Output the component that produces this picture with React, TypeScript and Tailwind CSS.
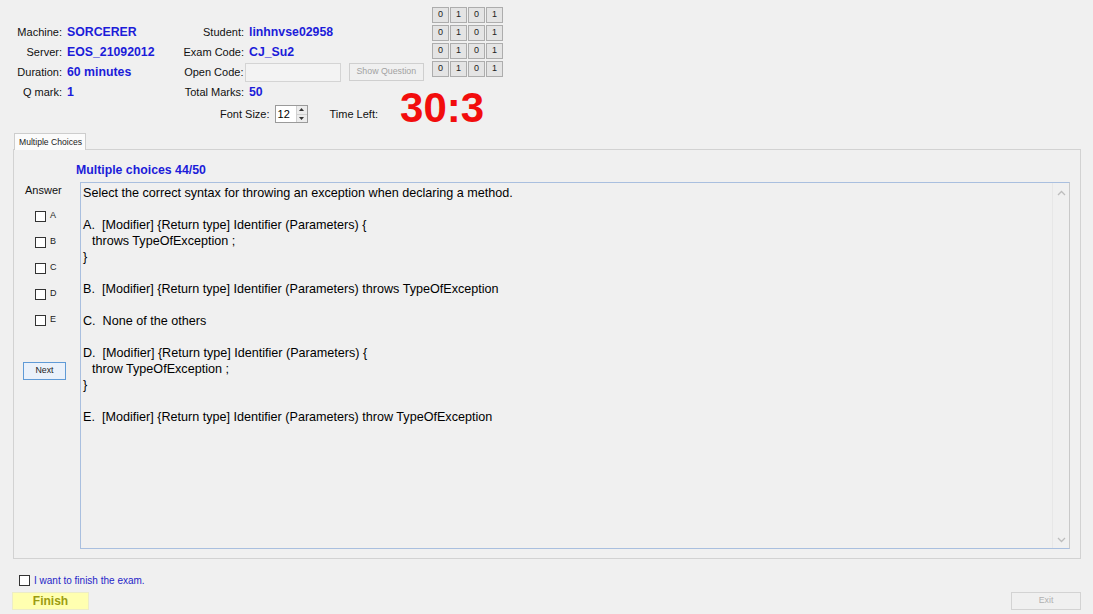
import React from "react";

const Box = () => (
  <span className="inline-block w-[11px] h-[11px] border border-[#333333] bg-white shrink-0" />
);

function InfoRow({ label, value, lw }: { label: string; value: React.ReactNode; lw: string }) {
  return (
    <div className="flex items-center h-[20px]">
      <span className={`${lw} text-right text-[11px] text-[#111]`}>{label}</span>
      <span className="ml-[5px] text-[12.3px] font-bold text-[#1c1cd9] whitespace-nowrap">{value}</span>
    </div>
  );
}

function Cell({ t }: { t: string }) {
  return (
    <div className="w-[17px] h-[16px] border border-[#adadad] bg-[#e4e4e4] flex items-center justify-center text-[9px] text-[#222]">
      {t}
    </div>
  );
}

const Up = () => (
  <svg width="9" height="6" viewBox="0 0 9 6">
    <path d="M1 5 L4.5 1.5 L8 5" fill="none" stroke="#bdbdbd" strokeWidth="1.3" />
  </svg>
);
const Down = () => (
  <svg width="9" height="6" viewBox="0 0 9 6">
    <path d="M1 1 L4.5 4.5 L8 1" fill="none" stroke="#bdbdbd" strokeWidth="1.3" />
  </svg>
);

export default function App() {
  const lines: React.ReactNode[] = [
    "Select the correct syntax for throwing an exception when declaring a method.",
    "",
    "A.  [Modifier] {Return type] Identifier (Parameters) {",
    <span className="pl-[9px]">throws TypeOfException ;</span>,
    "}",
    "",
    "B.  [Modifier] {Return type] Identifier (Parameters) throws TypeOfException",
    "",
    "C.  None of the others",
    "",
    "D.  [Modifier] {Return type] Identifier (Parameters) {",
    <span className="pl-[9px]">throw TypeOfException ;</span>,
    "}",
    "",
    "E.  [Modifier] {Return type] Identifier (Parameters) throw TypeOfException",
  ];
  return (
    <div
      className="w-[1093px] h-[614px] bg-[#f0f0f0] overflow-hidden text-black"
      style={{ fontFamily: '"Liberation Sans", Arial, sans-serif' }}
    >
      {/* header */}
      <div className="h-[133px] flex">
        <div className="w-[170px] ml-[10px] pt-[22px]">
          <InfoRow lw="w-[52px]" label="Machine:" value="SORCERER" />
          <InfoRow lw="w-[52px]" label="Server:" value="EOS_21092012" />
          <InfoRow lw="w-[52px]" label="Duration:" value="60 minutes" />
          <InfoRow lw="w-[52px]" label="Q mark:" value="1" />
        </div>
        <div className="flex flex-col pt-[7px]">
          <div className="flex">
            <div className="w-[244px] mt-[15px]">
              <InfoRow lw="w-[64px]" label="Student:" value="linhnvse02958" />
              <InfoRow lw="w-[64px]" label="Exam Code:" value="CJ_Su2" />
              <div className="flex items-center h-[20px]">
                <span className="w-[64px] text-right text-[11px] text-[#111]">Open Code:</span>
                <div className="ml-[2px] w-[96px] h-[19px] border border-[#d4d4d4] bg-[#f3f3f3]" />
                <div className="ml-[8px] w-[76px] h-[18px] border border-[#cfcfcf] bg-[#f0f0f0] flex items-center justify-center text-[8.8px] text-[#a2a2a2]">
                  Show Question
                </div>
              </div>
              <InfoRow lw="w-[64px]" label="Total Marks:" value="50" />
            </div>
            <div className="ml-[8px] flex flex-col gap-[2px]">
              {[0, 1, 2, 3].map((r) => (
                <div key={r} className="flex gap-[1px]">
                  <Cell t="0" />
                  <Cell t="1" />
                  <Cell t="0" />
                  <Cell t="1" />
                </div>
              ))}
            </div>
          </div>
          <div className="flex items-start pl-[40px]">
            <div className="h-[24px] flex items-center text-[11px] text-[#111]">Font Size:</div>
            <div className="h-[24px] flex items-center ml-[5px]">
              <div className="w-[33px] h-[18px] border border-[#9a9a9a] bg-white flex items-center">
                <span className="text-[11px] pl-[2px] flex-1">12</span>
                <div className="w-[11px] h-full flex flex-col border-l border-[#d0d0d0]">
                  <div className="flex-1 flex items-center justify-center bg-[#ececec] border-b border-[#d0d0d0]">
                    <svg width="5" height="3" viewBox="0 0 5 3"><path d="M0 3 L2.5 0 L5 3Z" fill="#333" /></svg>
                  </div>
                  <div className="flex-1 flex items-center justify-center bg-[#ececec]">
                    <svg width="5" height="3" viewBox="0 0 5 3"><path d="M0 0 L2.5 3 L5 0Z" fill="#333" /></svg>
                  </div>
                </div>
              </div>
            </div>
            <div className="h-[24px] flex items-center ml-[22px] text-[11px] text-[#111]">Time Left:</div>
            <div className="ml-[22px] -mt-[16px] text-[42px] leading-[43px] font-bold text-[#f20d0d]">30:3</div>
          </div>
        </div>
      </div>

      {/* tab strip */}
      <div className="h-[16px] pl-[14px] flex items-end">
        <div className="relative z-10 -mb-[1px] w-[72px] h-[17px] border border-b-0 border-[#cdcdcd] bg-[#fbfbfb] flex items-center pl-[4px] text-[8.6px] text-[#222]">
          Multiple Choices
        </div>
      </div>

      {/* panel */}
      <div className="mx-[13px] w-[1068px] h-[410px] border border-[#d2d2d2] bg-[#f0f0f0]">
        <div className="pt-[13px] pl-[62px] h-[32px] text-[12.3px] font-bold text-[#1c1cd9] leading-[14px]">
          Multiple choices 44/50
        </div>
        <div className="flex">
          <div className="w-[66px] flex flex-col">
            <div className="mt-[1px] pl-[11px] h-[14px] leading-[14px] text-[11px] text-[#111]">Answer</div>
            <div className="mt-[6px]">
              {["A", "B", "C", "D", "E"].map((l) => (
                <div key={l} className="h-[26px] pl-[21px] flex items-center">
                  <Box />
                  <span className="ml-[4px] text-[9px] text-[#222]">{l}</span>
                </div>
              ))}
            </div>
            <div className="mt-[29px] ml-[9px] w-[43px] h-[18px] border border-[#5f9ad6] bg-[#eaf1fa] flex items-center justify-center text-[8.8px] text-[#222]">
              Next
            </div>
          </div>
          <div className="w-[990px] h-[367px] border border-[#a9bfdf] border-r-[#c9c9c9] bg-[#f0f0f0] flex">
            <div className="flex-1 pl-[2px] pt-[2px] text-[12.6px] leading-[16px] text-black whitespace-pre">
              {lines.map((l, i) => (
                <div key={i} className="h-[16px]">{l}</div>
              ))}
            </div>
            <div className="w-[17px] border-l border-[#e7e7e7] flex flex-col items-center justify-between pt-[7px] pb-[5px]">
              <Up />
              <Down />
            </div>
          </div>
        </div>
      </div>

      {/* bottom */}
      <div className="mt-[16px] pl-[19px] h-[11px] flex items-center">
        <Box />
        <span className="ml-[4px] text-[10px] text-[#2626c8]">I want to finish the exam.</span>
      </div>
      <div className="mt-[6px] px-[12px] flex justify-between">
        <div className="w-[77px] h-[18px] bg-[#ffffb0] border border-[#ececc8] flex items-center justify-center text-[12px] font-bold text-[#9c9c10]">
          Finish
        </div>
        <div className="w-[70px] h-[18px] border border-[#d3d3d3] bg-[#f0f0f0] flex items-center justify-center text-[8.8px] text-[#b0b0b0]">
          Exit
        </div>
      </div>
    </div>
  );
}
